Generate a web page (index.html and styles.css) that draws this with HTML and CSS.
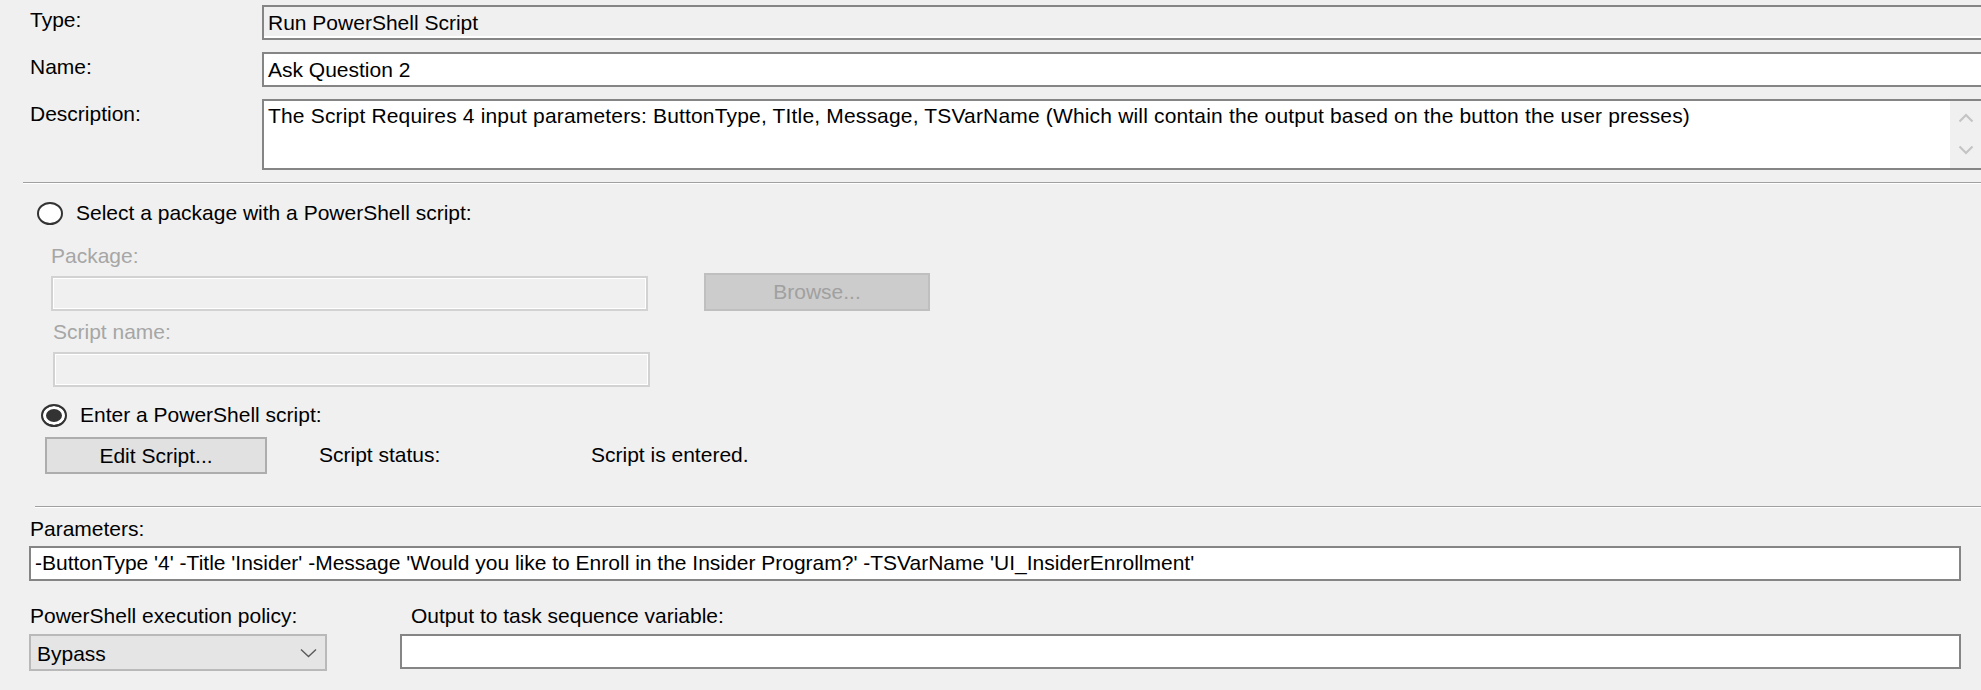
FILE: index.html
```html
<!DOCTYPE html>
<html>
<head>
<meta charset="utf-8">
<title>Run PowerShell Script</title>
<link rel="stylesheet" href="styles.css">
</head>
<body>
<div class="dialog">
  <div class="props">
    <div class="plabel">Type:</div>
    <div class="box box-readonly">Run PowerShell Script</div>
    <div class="plabel">Name:</div>
    <div class="box">Ask Question 2</div>
    <div class="plabel">Description:</div>
    <div class="box box-multi">
      <div class="multi-text">The Script Requires 4 input parameters: ButtonType, TItle, Message, TSVarName (Which will contain the output based on the button the user presses)</div>
      <div class="vscroll">
        <svg width="16" height="10" viewBox="0 0 16 10"><polyline points="1.5,8.5 8,2 14.5,8.5" fill="none" stroke="#c4c4c4" stroke-width="2.2"/></svg>
        <svg width="16" height="10" viewBox="0 0 16 10"><polyline points="1.5,1.5 8,8 14.5,1.5" fill="none" stroke="#c4c4c4" stroke-width="2.2"/></svg>
      </div>
    </div>
  </div>

  <div class="sep sep-1"></div>

  <div class="radio-row radio-row-1">
    <span class="radio"></span>
    <span>Select a package with a PowerShell script:</span>
  </div>

  <div class="pkg">
    <div class="dlabel">Package:</div>
    <div class="field-row">
      <div class="dbox"></div>
      <div class="btn btn-disabled">Browse...</div>
    </div>
    <div class="dlabel dlabel-script">Script name:</div>
    <div class="dbox dbox-script"></div>
  </div>

  <div class="radio-row radio-row-2">
    <span class="radio radio-on"></span>
    <span>Enter a PowerShell script:</span>
  </div>

  <div class="edit-row">
    <div class="btn btn-edit">Edit Script...</div>
    <div class="status-label">Script status:</div>
    <div class="status-value">Script is entered.</div>
  </div>

  <div class="sep sep-2"></div>

  <div class="params-label">Parameters:</div>
  <div class="box box-params">-ButtonType '4' -Title 'Insider' -Message 'Would you like to Enroll in the Insider Program?' -TSVarName 'UI_InsiderEnrollment'</div>

  <div class="bottom">
    <div class="blabel">PowerShell execution policy:</div>
    <div class="blabel blabel-out">Output to task sequence variable:</div>
    <div class="combo">
      <span>Bypass</span>
      <svg width="17" height="10" viewBox="0 0 17 10"><polyline points="1,1.5 8.5,8.5 16,1.5" fill="none" stroke="#5a5a5a" stroke-width="1.4"/></svg>
    </div>
    <div class="box box-out"></div>
  </div>
</div>
</body>
</html>
```

FILE: styles.css
```css
html, body {
  margin: 0;
  padding: 0;
  background: #f0f0f0;
  overflow: hidden;
}

body {
  font-family: "Liberation Sans", Arial, sans-serif;
  font-size: 21px;
  line-height: 24px;
  color: #000;
  width: 1981px;
  height: 690px;
}

.dialog {
  position: relative;
  width: 1981px;
  height: 690px;
}

/* ---------- top property grid ---------- */
.props {
  display: grid;
  grid-template-columns: 232px 1721px;
  row-gap: 12px;
  padding: 5px 0 0 30px;
}

.plabel {
  padding-top: 3px;
}

.box {
  box-sizing: border-box;
  height: 35px;
  border: 2px solid #858585;
  background: #fff;
  padding: 4px 4px 0 4px;
  white-space: nowrap;
  overflow: hidden;
}

.box-readonly {
  background: #f0f0f0;
  box-shadow: inset 0 -2px 0 #ffffff;
}

.box-multi {
  height: 71px;
  padding: 0;
  display: flex;
}

.multi-text {
  flex: 1;
  padding: 3px 4px 0 4px;
  white-space: nowrap;
  letter-spacing: 0.17px;
}

.vscroll {
  width: 31px;
  background: #f0f0f0;
  display: flex;
  flex-direction: column;
  align-items: center;
  justify-content: space-between;
  padding: 12px 0 13px 0;
}

.vscroll svg {
  display: block;
}

/* ---------- separators ---------- */
.sep {
  height: 1px;
  background: #a0a0a0;
  border-bottom: 1px solid #ffffff;
}

.sep-1 {
  margin: 12px 0 0 23px;
}

.sep-2 {
  margin: 32px 0 0 35px;
}

/* ---------- radio rows ---------- */
.radio-row {
  display: flex;
  align-items: center;
  gap: 13px;
  height: 24px;
}

.radio-row-1 {
  margin: 17px 0 0 37px;
}

.radio-row-2 {
  margin: 16px 0 0 41px;
}

.radio {
  box-sizing: border-box;
  width: 26px;
  height: 23px;
  border: 2px solid #333333;
  border-radius: 50%;
  background: #ffffff;
  flex: none;
}

.radio-on {
  background: #333333;
  box-shadow: inset 0 0 0 3px #ffffff;
}

/* ---------- package block (disabled) ---------- */
.pkg {
  padding-left: 51px;
}

.dlabel {
  color: #a6a6a6;
  margin-top: 19px;
}

.dlabel-script {
  margin-top: 9px;
  margin-left: 2px;
}

.field-row {
  display: flex;
  align-items: flex-end;
  gap: 56px;
  margin-top: 5px;
}

.dbox {
  box-sizing: border-box;
  width: 597px;
  height: 35px;
  border: 2px solid #d2d2d2;
  box-shadow: inset 0 0 0 1px #ffffff;
  background: #f0f0f0;
}

.dbox-script {
  margin: 8px 0 0 2px;
}

/* ---------- buttons ---------- */
.btn {
  box-sizing: border-box;
  display: flex;
  align-items: center;
  justify-content: center;
  border: 2px solid #adadad;
  background: #e1e1e1;
}

.btn-disabled {
  width: 226px;
  height: 38px;
  background: #cccccc;
  border-color: #bfbfbf;
  color: #a0a0a0;
}

.edit-row {
  display: flex;
  align-items: flex-start;
  margin: 10px 0 0 45px;
}

.btn-edit {
  width: 222px;
  height: 37px;
}

.status-label {
  margin: 6px 0 0 52px;
  width: 272px;
}

.status-value {
  margin-top: 6px;
}

/* ---------- parameters ---------- */
.params-label {
  margin: 9px 0 0 30px;
}

.box-params {
  width: 1932px;
  margin: 5px 0 0 29px;
  padding: 3px 4px 0 4px;
}

/* ---------- bottom row ---------- */
.bottom {
  display: grid;
  grid-template-columns: 298px 1561px;
  column-gap: 73px;
  row-gap: 6px;
  margin: 23px 0 0 29px;
  align-items: start;
}

.blabel {
  padding-left: 1px;
}

.blabel-out {
  padding-left: 11px;
}

.combo {
  box-sizing: border-box;
  height: 37px;
  border: 2px solid #b9b9b9;
  background: #e5e5e5;
  display: flex;
  align-items: center;
  justify-content: space-between;
  padding: 2px 8px 0 6px;
}

.combo svg {
  display: block;
  margin-bottom: 2px;
}

.box-out {
  height: 35px;
}
```
